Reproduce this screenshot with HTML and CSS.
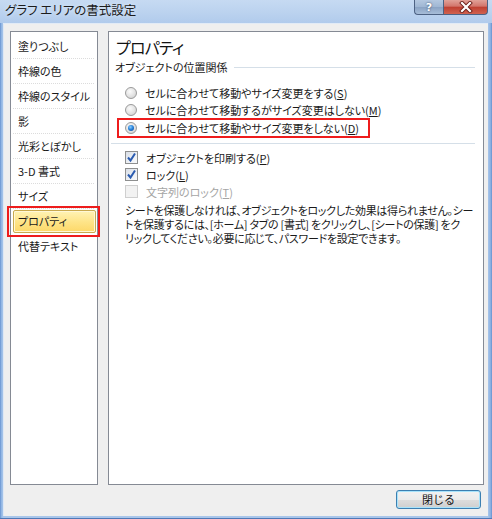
FILE: index.html
```html
<!DOCTYPE html>
<html lang="ja">
<head>
<meta charset="utf-8">
<title>グラフ エリアの書式設定</title>
<link rel="stylesheet" href="styles.css">
</head>
<body>
<div class="window">
  <div class="titlebar">
    <span class="title">グラフ エリアの書式設定</span>
    <div class="caption-btns">
      <span class="cbtn help">?</span>
      <span class="cbtn close">
        <svg width="16" height="12" viewBox="0 0 16 12">
          <path d="M4 2 L12 10 M12 2 L4 10" stroke="#6b1f1a" stroke-width="4" stroke-linecap="square"/>
          <path d="M4 2 L12 10 M12 2 L4 10" stroke="#ffffff" stroke-width="2.2" stroke-linecap="square"/>
        </svg>
      </span>
    </div>
  </div>
  <div class="dialog">
    <div class="panels">
      <ul class="nav">
        <li class="nav-item">塗りつぶし</li>
        <li class="nav-item">枠線の色</li>
        <li class="nav-item">枠線のスタイル</li>
        <li class="nav-item">影</li>
        <li class="nav-item">光彩とぼかし</li>
        <li class="nav-item">3-D 書式</li>
        <li class="nav-item">サイズ</li>
        <li class="nav-item selected"><span class="sel-box">プロパティ</span><span class="mark mark-nav"></span></li>
        <li class="nav-item">代替テキスト</li>
      </ul>
      <div class="content">
        <h1 class="heading">プロパティ</h1>
        <div class="group-title"><span>オブジェクトの位置関係</span><span class="rule"></span></div>
        <div class="options">
          <div class="row"><span class="radio"></span><span class="label">セルに合わせて移動やサイズ変更をする(<u>S</u>)</span></div>
          <div class="row"><span class="radio"></span><span class="label">セルに合わせて移動するがサイズ変更はしない(<u>M</u>)</span></div>
          <div class="row row-marked"><span class="radio checked"></span><span class="label">セルに合わせて移動やサイズ変更をしない(<u>D</u>)</span><span class="mark mark-row"></span></div>
        </div>
        <div class="separator"></div>
        <div class="checks">
          <div class="row"><span class="check on"><svg width="11" height="11" viewBox="0 0 11 11"><path d="M2 5.5 L4.5 8.5 L9 1.5" fill="none" stroke="#2a5bb0" stroke-width="2"/></svg></span><span class="label">オブジェクトを印刷する(<u>P</u>)</span></div>
          <div class="row"><span class="check on"><svg width="11" height="11" viewBox="0 0 11 11"><path d="M2 5.5 L4.5 8.5 L9 1.5" fill="none" stroke="#2a5bb0" stroke-width="2"/></svg></span><span class="label">ロック(<u>L</u>)</span></div>
          <div class="row disabled"><span class="check off"></span><span class="label">文字列のロック(<u>T</u>)</span></div>
        </div>
        <p class="note">
          <span class="note-line">シートを保護しなければ、オブジェクトをロックした効果は得られません。シー</span>
          <span class="note-line">トを保護するには、[ホーム] タブの [書式] をクリックし、[シートの保護] をク</span>
          <span class="note-line">リックしてください。必要に応じて、パスワードを設定できます。</span>
        </p>
      </div>
    </div>
    <div class="buttons">
      <button class="btn">閉じる</button>
    </div>
  </div>
</div>
</body>
</html>
```

FILE: styles.css
```css
* { box-sizing: border-box; }
html, body { margin: 0; padding: 0; }
body {
  width: 492px;
  height: 519px;
  overflow: hidden;
  font-family: "Noto Sans CJK JP", "Noto Sans", sans-serif;
  font-size: 11px;
  color: #1a1a1a;
  font-feature-settings: "palt";
}
.window {
  width: 492px;
  height: 519px;
  display: flex;
  flex-direction: column;
  background: linear-gradient(90deg, #5f8bcb 0, #8cb2e2 1px, #a9c6ea 3px, #a9c6ea calc(100% - 4px), #86acdf calc(100% - 1px), #5f8bcb 100%);
  padding: 0 4px 3px 3px;
  box-shadow: inset 0 -1px #4f78b6;
}
.titlebar {
  height: 23px;
  margin: 0 -4px 0 -3px;
  padding: 0 4px 0 5px;
  display: flex;
  align-items: flex-start;
  background: linear-gradient(180deg, #c6daf2 0%, #bcd3ef 50%, #b1cbec 100%);
}
.title {
  font-size: 12.5px;
  line-height: 20px;
  color: #1c1c1c;
  text-shadow: 0 0 4px #e6f0fb;
}
.caption-btns {
  margin-left: auto;
  display: flex;
}
.cbtn {
  height: 15px;
  display: flex;
  align-items: center;
  justify-content: center;
  border: 1px solid #4d6283;
  border-top: none;
}
.help {
  width: 29px;
  border-radius: 0 0 0 4px;
  border-right: none;
  background: linear-gradient(180deg, #b4c8e0 0%, #9fb6d3 50%, #8aa3c4 51%, #a7bdd8 100%);
  color: #ffffff;
  font-family: "DejaVu Sans", sans-serif;
  font-weight: bold;
  font-size: 11px;
  text-shadow: 0 0 2px #2c3d57;
}
.close {
  width: 45px;
  border-radius: 0 0 4px 0;
  background: linear-gradient(180deg, #e1a198 0%, #d2756b 45%, #bf3f31 50%, #d0624f 100%);
}
.dialog {
  flex: 1;
  display: flex;
  flex-direction: column;
  background: #efefef;
  box-shadow: inset 0 1px #e2ebf6, inset 1px 0 #dfe8f4;
  padding: 8px 4px 0 7px;
}
.panels {
  height: 454px;
  display: flex;
  gap: 10px;
}
.nav {
  width: 88px;
  margin: 0;
  list-style: none;
  padding: 2px 1px 0 2px;
  background: #fff;
  border: 1px solid #858a94;
}
.nav-item {
  height: 25px;
  line-height: 24px;
  padding-left: 5px;
  margin-right: 2px;
  border-bottom: 1px dotted #dcdcdc;
  position: relative;
  white-space: nowrap;
}
.nav-item:last-child { border-bottom: none; }
.nav-item.selected {
  border-bottom: none;
  padding: 1px 0 0 0;
  margin-right: 0;
}
.sel-box {
  display: block;
  height: 23px;
  line-height: 21px;
  padding-left: 4px;
  border: 1px solid #c9a94e;
  border-radius: 2px;
  background: linear-gradient(180deg, #fff3b5 0%, #fee58a 50%, #fdd868 100%);
  box-shadow: inset 0 0 0 1px #fff8d6;
}
.mark {
  position: absolute;
  border: 2px solid #ee1c1c;
  pointer-events: none;
}
.mark-nav {
  left: -6px;
  right: -4px;
  top: -3px;
  bottom: -3px;
}
.content {
  width: 376px;
  background: #fff;
  border: 1px solid #858a94;
  padding: 4px 7px 0 7px;
}
.heading {
  margin: 0;
  font-size: 16px;
  letter-spacing: -0.8px;
  font-weight: normal;
  line-height: 22px;
  color: #111;
}
.group-title {
  display: flex;
  align-items: center;
  height: 17px;
  line-height: 17px;
  margin-top: 1px;
  margin-left: -1px;
}
.rule {
  flex: 1;
  height: 1px;
  background: #d5dfe8;
  margin-left: 6px;
  margin-right: 1px;
}
.options { margin-top: 8px; }
.row {
  display: flex;
  align-items: center;
  height: 17px;
  padding-left: 9px;
  position: relative;
  white-space: nowrap;
}
.row-marked { margin-top: 1px; }
.mark-row {
  left: 1px;
  top: -1px;
  width: 253px;
  height: 20px;
}
.label { margin-left: 8px; }
.radio {
  width: 12px;
  height: 12px;
  border-radius: 50%;
  border: 1px solid #9a9a9a;
  background: radial-gradient(circle at 40% 35%, #fbfbfb 0%, #e2e2e2 55%, #c9c9c9 100%);
  position: relative;
  flex: none;
}
.radio.checked::after {
  content: "";
  position: absolute;
  left: 2px;
  top: 2px;
  width: 6px;
  height: 6px;
  border-radius: 50%;
  background: radial-gradient(circle at 40% 35%, #8fd0ff 0%, #2a84db 45%, #0b3f8f 100%);
}
.separator {
  height: 1px;
  background: #d5dfe8;
  margin: 7px 1px 5px -5px;
}
.check {
  width: 13px;
  height: 13px;
  flex: none;
  display: flex;
  align-items: center;
  justify-content: center;
}
.check.on {
  border: 1px solid #8e8f8f;
  background: linear-gradient(135deg, #d9dee6 0%, #eef1f5 60%, #f8f9fb 100%);
}
.check.off {
  border: 1px solid #cfcfcf;
  background: #f2f2f2;
}
.disabled .label { color: #a5a5a5; }
.note {
  margin: 3px 0 0 9px;
  line-height: 14px;
  letter-spacing: -0.3px;
}
.note-line {
  display: block;
  white-space: nowrap;
}
.buttons {
  display: flex;
  justify-content: flex-end;
  margin-top: 5px;
  padding-right: 3px;
}
.btn {
  width: 85px;
  height: 19px;
  padding: 0;
  font-family: inherit;
  font-size: 11px;
  line-height: 15px;
  color: #111;
  border: 1px solid #3c7fb1;
  border-radius: 3px;
  background: linear-gradient(180deg, #f2f2f2 0%, #ebebeb 50%, #dddddd 51%, #cfcfcf 100%);
  box-shadow: inset 0 0 0 1px #a8e3fb;
}
```
